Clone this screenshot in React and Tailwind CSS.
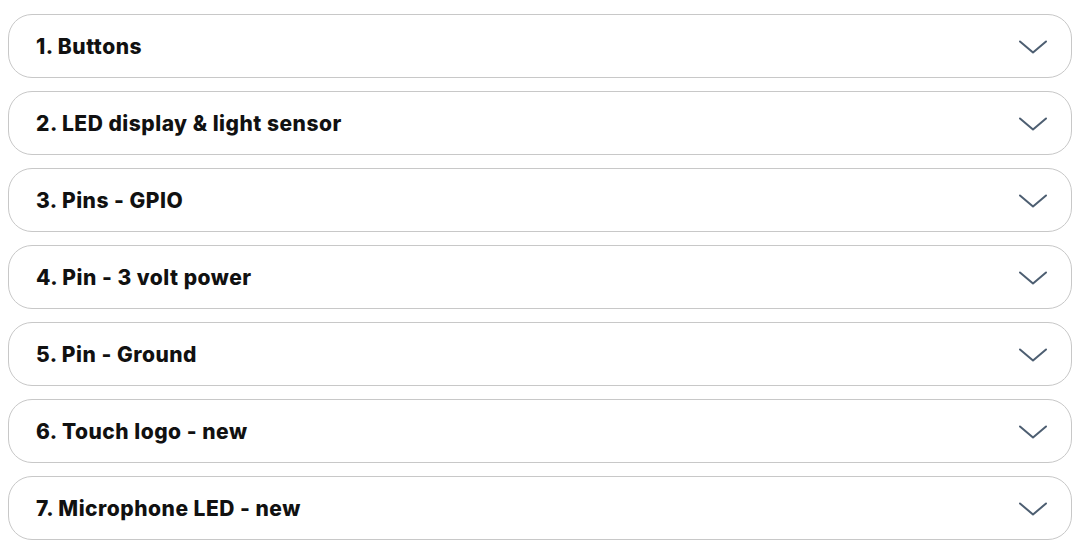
const items = [
  '1. Buttons',
  '2. LED display & light sensor',
  '3. Pins - GPIO',
  '4. Pin - 3 volt power',
  '5. Pin - Ground',
  '6. Touch logo - new',
  '7. Microphone LED - new',
]

function Chevron() {
  return (
    <svg width="28" height="14" viewBox="0 0 28 14" fill="none" className="text-[#4d5e71]">
      <path d="M1 1.5 L14 12.5 L27 1.5" stroke="currentColor" strokeWidth="2" strokeLinecap="round" strokeLinejoin="round" />
    </svg>
  )
}

export default function App() {
  return (
    <div className="min-h-screen bg-white pt-[14px] pl-2 pr-[15px] flex flex-col gap-[13px]" style={{ fontFamily: 'Inter, "Noto Sans", sans-serif' }}>
      {items.map((title) => (
        <button
          key={title}
          className="h-[64px] w-full rounded-[24px] border border-[#c8c8c8] bg-white flex items-center justify-between pl-[27px] pr-[24px] pt-[2px] text-left"
        >
          <span className="text-[21px] font-extrabold text-[#111] tracking-[0.5px]">{title}</span>
          <Chevron />
        </button>
      ))}
    </div>
  )
}
